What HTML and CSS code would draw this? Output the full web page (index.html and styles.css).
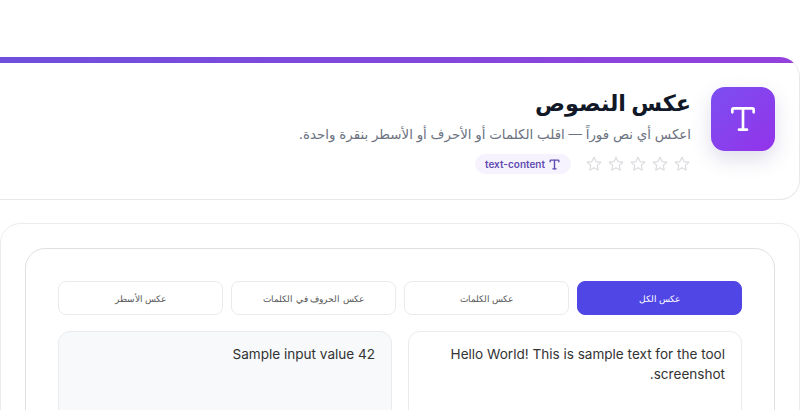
FILE: index.html
```html
<!DOCTYPE html>
<html lang="ar" dir="rtl">
<head>
    <meta charset="UTF-8">
    <meta name="viewport" content="width=device-width, initial-scale=1.0">
    <title>عكس النصوص</title>
    <link rel="stylesheet" href="styles.css">
</head>
<body>
    <header class="tool-header">
        <div class="tool-icon">
            <svg width="32" height="32" viewBox="0 0 24 24" fill="none" stroke="currentColor" stroke-width="2" stroke-linecap="round" stroke-linejoin="round">
                <path d="M12 4v16"/>
                <path d="M4 7V5a1 1 0 0 1 1-1h14a1 1 0 0 1 1 1v2"/>
                <path d="M9 20h6"/>
            </svg>
        </div>
        <div class="tool-info">
            <h1>عكس النصوص</h1>
            <p>اعكس أي نص فوراً — اقلب الكلمات أو الأحرف أو الأسطر بنقرة واحدة.</p>
            <div class="tool-meta">
                <div class="stars">
                    <svg class="star" viewBox="0 0 24 24"><path d="M12 3l2.7 5.8 6.3.8-4.6 4.3 1.2 6.3L12 17.1l-5.6 3.1 1.2-6.3L3 9.6l6.3-.8z"/></svg>
                    <svg class="star" viewBox="0 0 24 24"><path d="M12 3l2.7 5.8 6.3.8-4.6 4.3 1.2 6.3L12 17.1l-5.6 3.1 1.2-6.3L3 9.6l6.3-.8z"/></svg>
                    <svg class="star" viewBox="0 0 24 24"><path d="M12 3l2.7 5.8 6.3.8-4.6 4.3 1.2 6.3L12 17.1l-5.6 3.1 1.2-6.3L3 9.6l6.3-.8z"/></svg>
                    <svg class="star" viewBox="0 0 24 24"><path d="M12 3l2.7 5.8 6.3.8-4.6 4.3 1.2 6.3L12 17.1l-5.6 3.1 1.2-6.3L3 9.6l6.3-.8z"/></svg>
                    <svg class="star" viewBox="0 0 24 24"><path d="M12 3l2.7 5.8 6.3.8-4.6 4.3 1.2 6.3L12 17.1l-5.6 3.1 1.2-6.3L3 9.6l6.3-.8z"/></svg>
                </div>
                <span class="tag">
                    <svg width="13" height="13" viewBox="0 0 24 24" fill="none" stroke="currentColor" stroke-width="2.6" stroke-linecap="round" stroke-linejoin="round">
                        <path d="M12 4v16"/>
                        <path d="M4 7V5a1 1 0 0 1 1-1h14a1 1 0 0 1 1 1v2"/>
                        <path d="M9 20h6"/>
                    </svg>
                    <span dir="ltr">text-content</span>
                </span>
            </div>
        </div>
    </header>

    <main class="tool-body">
        <section class="panel">
            <div class="tabs">
                <button class="tab active">عكس الكل</button>
                <button class="tab">عكس الكلمات</button>
                <button class="tab">عكس الحروف في الكلمات</button>
                <button class="tab">عكس الأسطر</button>
            </div>
            <div class="editors">
                <div class="editor">Hello World! This is sample text for the tool screenshot.</div>
                <div class="editor output">Sample input value 42</div>
            </div>
        </section>
    </main>
</body>
</html>
```
FILE: styles.css
```css
* {
    box-sizing: border-box;
}

html, body {
    height: 410px;
    overflow: hidden;
}

body {
    margin: 0;
    padding-top: 57px;
    background-color: #fff;
    font-family: "Inter", "DejaVu Sans", sans-serif;
    color: #111827;
}

.tool-header {
    position: relative;
    display: flex;
    gap: 20px;
    width: 1000px;
    height: 143px;
    padding: 30px 24px 0;
    border: 1px solid #e8e8ea;
    border-top: none;
    border-radius: 20px;
    background-color: #fff;
    overflow: hidden;
}

.tool-header::before {
    content: "";
    position: absolute;
    top: 0;
    left: 0;
    right: 0;
    height: 6px;
    background: linear-gradient(90deg, #6f4fdc 20%, #9440dc);
}

.tool-icon {
    flex: none;
    display: flex;
    align-items: center;
    justify-content: center;
    width: 64px;
    height: 64px;
    border-radius: 14px;
    background: linear-gradient(135deg, #7c4ff0, #9333ea);
    color: #fff;
    box-shadow: 0 8px 20px rgba(80, 60, 140, 0.18);
}

h1 {
    margin: 0 0 5px;
    font-size: 22.3px;
    line-height: 32px;
    font-weight: 700;
}

.tool-info p {
    margin: 0 0 10px;
    font-size: 13.4px;
    line-height: 20px;
    color: #6b7280;
}

.tool-meta {
    display: flex;
    align-items: center;
    gap: 14px;
}

.stars {
    display: flex;
    gap: 4px;
}

.star {
    width: 18px;
    height: 18px;
    fill: none;
    stroke: #dcdce0;
    stroke-width: 1.6;
    stroke-linejoin: round;
}

.tag {
    display: flex;
    align-items: center;
    gap: 3px;
    height: 20px;
    padding: 0 10px;
    border-radius: 10px;
    background-color: #f6f3ff;
    color: #5f4bb0;
    font-size: 10px;
    font-weight: 600;
}

.tool-body {
    margin-top: 23px;
    height: 300px;
    padding: 24px;
    border: 1px solid #ececee;
    border-radius: 20px;
}

.panel {
    height: 300px;
    padding: 32px;
    border: 1px solid #e0e0e4;
    border-radius: 20px;
}

.tabs {
    display: grid;
    grid-template-columns: repeat(4, 1fr);
    gap: 8px;
    margin-bottom: 16px;
}

.tab {
    height: 34px;
    border: 1px solid #ebebed;
    border-radius: 8px;
    background-color: #fff;
    color: #555;
    font-size: 9.2px;
}

.tab.active {
    border-color: #4f46e5;
    background-color: #4f46e5;
    color: #fff;
}

.editors {
    display: grid;
    grid-template-columns: 1fr 1fr;
    gap: 16px;
}

.editor {
    height: 120px;
    padding: 12px 16px;
    border: 1px solid #ebebed;
    border-radius: 12px;
    font-size: 13.55px;
    line-height: 20px;
    color: #333;
}

.output {
    background-color: #f7f9fb;
}
```
